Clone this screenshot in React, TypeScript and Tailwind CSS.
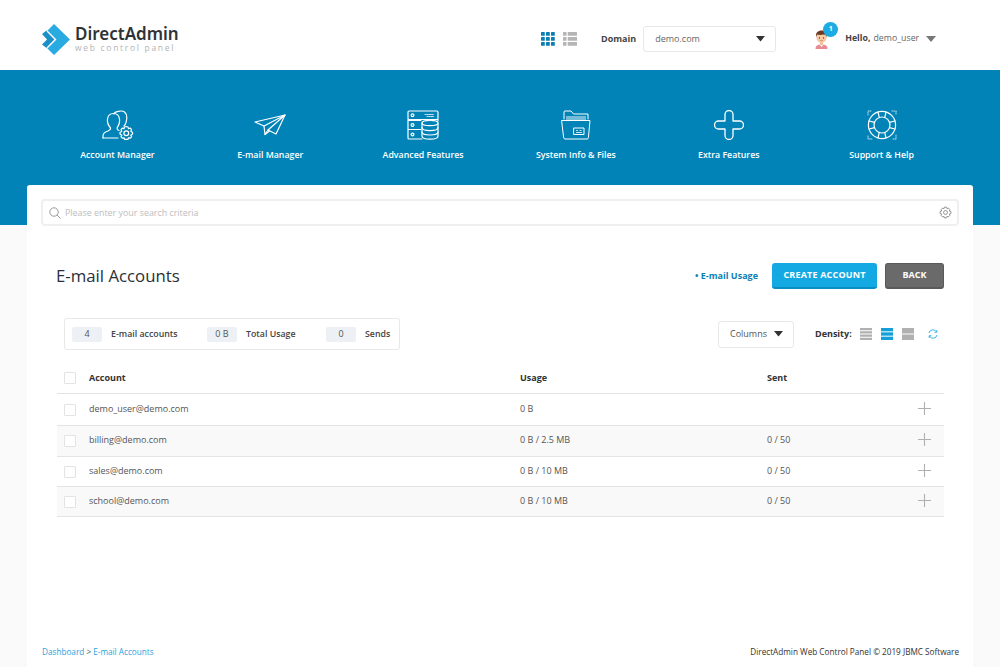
import React from "react";

const Logo = () => (
  <svg width="28" height="32" viewBox="0 0 28 32" className="shrink-0 mt-[1px]">
    <path d="M12 0 L28 15.5 L12 31 L5 24 L13.5 15.5 L5 7 Z" fill="#29abe2" />
    <path d="M0 10 L4.5 6.5 L12.5 15.5 L4.5 24 L0 20.5 L5 15.5 Z" fill="#1b8fc6" />
    <path d="M5 7 L13.5 15.5 L5 24" fill="none" stroke="#fff" strokeWidth="1.4" />
  </svg>
);

const GridIcon = () => (
  <svg width="14" height="14" viewBox="0 0 14 14" fill="#0a7fb5">
    {[0, 5, 10].map((y) => [0, 5, 10].map((x) => <rect key={`${x}${y}`} x={x} y={y} width="3.8" height="3.8" rx="0.6" />))}
  </svg>
);
const ListIcon = () => (
  <svg width="14" height="14" viewBox="0 0 14 14" fill="#b5b5b5">
    {[0, 5, 10].map((y) => (
      <g key={y}>
        <rect x="0" y={y} width="3.5" height="3.8" rx="0.5" />
        <rect x="4.7" y={y} width="9.3" height="3.8" rx="0.5" />
      </g>
    ))}
  </svg>
);

const Avatar = () => (
  <svg width="15" height="19" viewBox="0 0 14 19">
    <path d="M1 19 C1 15.5 3 14.5 7 14.5 C11 14.5 13 15.5 13 19 Z" fill="#e88a94" />
    <path d="M5 14.5 L7 17 L9 14.5 Z" fill="#fff" />
    <rect x="5.5" y="11.5" width="3" height="3.5" fill="#f0bd94" />
    <ellipse cx="7" cy="7.5" rx="5" ry="5.4" fill="#f6caa4" />
    <path d="M1.6 7.5 C0.8 2.5 3.5 0.5 7 0.5 C10.5 0.5 13 2.5 12.4 7.5 C12 5.5 11 4.5 9.5 4.5 C7 5 4 5 3 4.5 C2.2 5.1 1.9 6.1 1.6 7.5 Z" fill="#6b3a22" />
    <circle cx="5" cy="7.9" r="0.6" fill="#3a2a20" />
    <circle cx="9" cy="7.9" r="0.6" fill="#3a2a20" />
    <path d="M5.6 10.3 Q7 11.3 8.4 10.3" stroke="#b5654a" strokeWidth="0.6" fill="none" />
  </svg>
);

const stroke = { fill: "none", stroke: "#fff", strokeWidth: 1.2, strokeLinecap: "round" as const, strokeLinejoin: "round" as const };

const AccountIcon = () => (
  <svg width="32" height="30" viewBox="0 0 32 30" className="ml-[1px]" {...stroke}>
    <path d="M12 4 C12 1.5 20 0 22.5 2 C25 4 25 9 24 12.5 C23.5 14 23 15 22 16" />
    <path d="M1 28 L1 26 C1 23 3 22 6 21 C8 20 9 19.5 8.5 18 C6 15 5 12 5.5 9 C6 5 9 3.5 11.5 3.5 C14 3.5 17 5 17.5 9 C18 12 17 15 15 18 C15 19 15.5 20 17 20.5" />
    <path d="M1 28 L16 28" />
    <circle cx="24.3" cy="23.2" r="2.4" />
    <path d="M24.3 16.5 L26 17 L26.5 18.6 L28.3 18.2 L29.6 19.6 L28.8 21.2 L30.6 22.4 L30.6 24 L28.8 25.2 L29.6 26.8 L28.3 28.2 L26.5 27.8 L26 29.4 L22.6 29.4 L22.1 27.8 L20.3 28.2 L19 26.8 L19.8 25.2 L18 24 L18 22.4 L19.8 21.2 L19 19.6 L20.3 18.2 L22.1 18.6 L22.6 17 Z" />
  </svg>
);
const MailIcon = () => (
  <svg width="32" height="22" viewBox="0 0 32 22" {...stroke}>
    <path d="M1 8 L31 1 L22 20 L14 16 L11 20.5 L10 12 Z" />
    <path d="M10 12 L31 1 L14 16" />
    <path d="M11 20.5 L15.5 17" />
  </svg>
);
const ServerIcon = () => (
  <svg width="32" height="30" viewBox="0 0 32 30" {...stroke}>
    <rect x="1" y="1" width="30" height="8.5" rx="1.2" />
    <path d="M1 10.5 H14 M1 19.5 H14 M1 9.5 V28 Q1 29 2 29 H15" />
    <path d="M31 9.5 V11" />
    <circle cx="5.5" cy="5.2" r="1.4" />
    <circle cx="5.5" cy="15" r="1.4" />
    <circle cx="5.5" cy="24.5" r="1.4" />
    <path d="M18 4.5 H27 M20 6.5 H27" strokeWidth="0.8" strokeDasharray="1 0.8" />
    <ellipse cx="23" cy="13" rx="8" ry="2.6" />
    <path d="M15 13 V26 C15 28 19 29.2 23 29.2 C27 29.2 31 28 31 26 V13" />
    <path d="M15 17.5 C15 19.5 19 20.6 23 20.6 C27 20.6 31 19.5 31 17.5" />
    <path d="M15 22 C15 24 19 25 23 25 C27 25 31 24 31 22" />
  </svg>
);
const FolderIcon = () => (
  <svg width="30" height="30" viewBox="0 0 30 30" {...stroke} strokeWidth={1}>
    <path d="M3 9 V2 Q3 1 4 1 H10 L12.5 4 H27 V9" />
    <rect x="5" y="6" width="20" height="4" fill="#fff" fillOpacity="0.45" stroke="none" />
    <path d="M1 10.5 H29 L27.4 27.5 Q27.3 29 26 29 H4 Q2.7 29 2.6 27.5 Z" />
    <rect x="13" y="18" width="10" height="6.5" />
    <path d="M15.5 20.5 H16.5 M19 20.5 H20 M15.5 22.5 H20.5" strokeWidth="0.8" />
  </svg>
);
const PlusIcon = () => (
  <svg width="30" height="30" viewBox="0 0 30 30" {...stroke} strokeWidth={1.3}>
    <path d="M11 4.5 A4 4 0 0 1 19 4.5 V11 H25.5 A4 4 0 0 1 25.5 19 H19 V25.5 A4 4 0 0 1 11 25.5 V19 H4.5 A4 4 0 0 1 4.5 11 H11 Z" />
  </svg>
);
const BuoyIcon = () => (
  <svg width="30" height="30" viewBox="0 0 30 30" {...stroke}>
    <circle cx="15" cy="15" r="13.6" />
    <circle cx="15" cy="15" r="8" />
    <path d="M11 2.2 L12.3 7.6 M19 2.2 L17.7 7.6 M11 27.8 L12.3 22.4 M19 27.8 L17.7 22.4 M2.2 11 L7.6 12.3 M2.2 19 L7.6 17.7 M27.8 11 L22.4 12.3 M27.8 19 L22.4 17.7" />
    <path d="M1 5 V1 H5 M25 1 H29 V5 M29 25 V29 H25 M5 29 H1 V25" strokeWidth="0.7" strokeDasharray="1 1" />
  </svg>
);

const nav: [React.ReactNode, string][] = [
  [<AccountIcon />, "Account Manager"],
  [<MailIcon />, "E-mail Manager"],
  [<ServerIcon />, "Advanced Features"],
  [<FolderIcon />, "System Info & Files"],
  [<PlusIcon />, "Extra Features"],
  [<BuoyIcon />, "Support & Help"],
];

const Caret = ({ color = "#333", w = 10 }: { color?: string; w?: number }) => (
  <svg width={w} height={(w * 6) / 10} viewBox="0 0 10 6"><path d="M0 0 H10 L5 6 Z" fill={color} /></svg>
);

const Gear = () => (
  <svg width="13" height="13" viewBox="0 0 24 24" fill="none" stroke="#8a8a8a" strokeWidth="1.7" strokeLinejoin="round">
    <circle cx="12" cy="12" r="3.6" />
    <path d="M10 2 H14 L14.8 5 L17.4 3.9 L20.1 6.6 L19 9.2 L22 10 V14 L19 14.8 L20.1 17.4 L17.4 20.1 L14.8 19 L14 22 H10 L9.2 19 L6.6 20.1 L3.9 17.4 L5 14.8 L2 14 V10 L5 9.2 L3.9 6.6 L6.6 3.9 L9.2 5 Z" />
  </svg>
);

const Density = ({ n, color }: { n: number; color: string }) => {
  const gap = 1;
  const h = (12 - (n - 1) * gap) / n;
  return (
    <svg width="12" height="12" viewBox="0 0 12 12" fill={color}>
      {Array.from({ length: n }).map((_, i) => (
        <rect key={i} x="0" y={i * (h + gap)} width="12" height={h} />
      ))}
    </svg>
  );
};

const Stat = ({ v, l, cls }: { v: string; l: string; cls: string }) => (
  <div className={`flex items-center ${cls}`}>
    <span className="w-[30px] h-[15px] bg-[#edf1f5] rounded-[2px] flex items-center justify-center text-[#555]">{v}</span>
    <span className="ml-[9px] pt-[1px] font-semibold text-[#444] text-[8.8px]">{l}</span>
  </div>
);

const Check = () => <span className="block w-[12px] h-[12px] bg-white border border-[#e3e3e3] rounded-[1px]" />;

const rows = [
  ["demo_user@demo.com", "0 B", "", "h-[32px]", ""],
  ["billing@demo.com", "0 B / 2.5 MB", "0 / 50", "h-[31px]", "bg-[#f9f9f9]"],
  ["sales@demo.com", "0 B / 10 MB", "0 / 50", "h-[30px]", ""],
  ["school@demo.com", "0 B / 10 MB", "0 / 50", "h-[30px]", "bg-[#f9f9f9]"],
];

const RowPlus = () => (
  <svg width="13" height="13" viewBox="0 0 13 13" stroke="#b0b0b0" strokeWidth="1.1"><path d="M6.5 0 V13 M0 6.5 H13" /></svg>
);

export default function App() {
  return (
    <div className="w-[1000px] h-[667px] overflow-hidden bg-[#fafafa] text-[9px] text-[#555] flex flex-col" style={{ fontFamily: '"Open Sans", "Noto Sans", sans-serif' }}>
      <header className="h-[70px] shrink-0 bg-white flex items-center pt-[8px]">
        <div className="ml-[42px] flex items-center w-[498px]">
          <Logo />
          <div className="ml-[5px] mt-[1px] flex flex-col">
            <span className="text-[17px] leading-[14px] font-semibold text-[#2e3338]" style={{ fontFamily: '"Noto Sans", sans-serif' }}>DirectAdmin</span>
            <span className="text-[8.5px] leading-[9px] tracking-[0.2em] text-[#b4b4b4] mt-[2px] whitespace-nowrap">web control panel</span>
          </div>
        </div>
        <div className="ml-[1px] flex items-center gap-[8px]">
          <GridIcon />
          <ListIcon />
        </div>
        <span className="ml-[24px] font-bold text-[9px] text-[#444]">Domain</span>
        <div className="ml-[7px] w-[133px] h-[26px] border border-[#e8e8e8] rounded-[3px] flex items-center justify-between pl-[11px] pr-[10px] text-[9px] text-[#666]">
          demo.com
          <Caret w={9} />
        </div>
        <div className="ml-[38px] relative flex items-center h-[19px] mt-[1px]">
          <Avatar />
          <span className="absolute left-[9px] -top-[8px] w-[15px] h-[15px] rounded-full bg-[#1cabe2] text-white text-[7px] font-bold flex items-center justify-center">1</span>
        </div>
        <span className="ml-[16px] font-bold text-[8.8px] text-[#444]">Hello,</span>
        <span className="ml-[3px] text-[8.8px] text-[#666]">demo_user</span>
        <span className="ml-[7px]"><Caret color="#777" /></span>
      </header>

      <nav className="h-[155px] shrink-0 bg-[#0183b7] pl-[41px] pr-[42px]">
        <div className="grid grid-cols-6 pt-[40px]">
          {nav.map(([icon, label]) => (
            <div key={label} className="flex flex-col items-center">
              <div className="h-[30px] flex items-center justify-center">{icon}</div>
              <span className="mt-[8px] text-[8.8px] leading-[14px] font-semibold text-white whitespace-nowrap">{label}</span>
            </div>
          ))}
        </div>
      </nav>

      <main className="-mt-[40px] mx-[27px] flex-1 bg-white rounded-t-[3px] flex flex-col relative">
        <div className="mx-[14px] mt-[14px] h-[27px] border-2 border-[#efefef] rounded-[4px] flex items-center pl-[6px] pr-[5px]">
          <svg width="12" height="12" viewBox="0 0 12 12" fill="none" stroke="#9a9a9a" strokeWidth="1"><circle cx="5" cy="5" r="4.2" /><path d="M8 8 L11.5 11.5" /></svg>
          <span className="ml-[4px] text-[#bdbdbd] flex-1 text-[8.9px]">Please enter your search criteria</span>
          <Gear />
        </div>

        <div className="ml-[30px] mr-[29px] mt-[36px] h-[27px] flex items-center">
          <h1 className="text-[16.8px] font-normal text-[#2a2f35] -ml-[1px] mt-[1px]">E-mail Accounts</h1>
          <a className="ml-auto text-[9px] font-bold text-[#0a7fb5]">• E-mail Usage</a>
          <button className="ml-[14px] w-[105px] h-[26px] bg-[#14a9e3] border-b-2 border-[#0a8fc4] rounded-[3px] text-white font-bold text-[9px] tracking-[0.02em]">CREATE ACCOUNT</button>
          <button className="ml-[8px] w-[59px] h-[26px] bg-[#6a6a6a] border border-[#5a5a5a] border-b-2 rounded-[3px] text-white font-bold text-[9px]">BACK</button>
        </div>

        <div className="mt-[29px] ml-[37px] mr-[29px] h-[32px] flex items-center">
          <div className="w-[336px] h-[32px] border border-[#e8e8e8] rounded-[3px] relative flex items-center">
            <Stat v="4" l="E-mail accounts" cls="ml-[7px] w-[135px]" />
            <Stat v="0 B" l="Total Usage" cls="w-[119px]" />
            <Stat v="0" l="Sends" cls="" />
          </div>
          <div className="ml-[318px] w-[76px] h-[27px] border border-[#e8e8e8] rounded-[3px] flex items-center justify-center gap-[7px] pl-[1px] text-[#555]">
            Columns <Caret w={9} />
          </div>
          <span className="ml-[21px] font-bold text-[#333]">Density:</span>
          <span className="ml-[8px]"><Density n={4} color="#b0b0b0" /></span>
          <span className="ml-[9px]"><Density n={3} color="#14a0d8" /></span>
          <span className="ml-[9px]"><Density n={2} color="#b0b0b0" /></span>
          <svg className="ml-[14px]" width="10" height="10" viewBox="0 0 10 10" fill="none" stroke="#29abe2" strokeWidth="0.9">
            <path d="M1 4 A4 4 0 0 1 8.5 3 M9 6 A4 4 0 0 1 1.5 7" />
            <path d="M8.8 1 V3.3 H6.6 M1.2 9 V6.7 H3.4" />
          </svg>
        </div>

        <div className="ml-[30px] mr-[29px] mt-[13px]">
          <div className="h-[31px] flex items-center border-b border-[#e4e4e4] font-bold text-[#333]">
            <span className="ml-[7px] w-[25px]"><Check /></span>
            <span className="w-[431px]">Account</span>
            <span className="w-[247px]">Usage</span>
            <span>Sent</span>
          </div>
          {rows.map(([a, u, s, h, bg]) => (
            <div key={a} className={`${h} ${bg} flex items-center border-b border-[#e4e4e4] text-[#555] pb-[2px]`}>
              <span className="ml-[7px] w-[25px] mt-[2px]"><Check /></span>
              <span className="w-[431px]">{a}</span>
              <span className="w-[247px]">{u}</span>
              <span className="flex-1">{s}</span>
              <span className="mr-[13px] -mt-[1px]"><RowPlus /></span>
            </div>
          ))}
        </div>

        <div className="mt-auto mx-[14px] mb-[9px] flex justify-between text-[8.2px]">
          <span className="text-[#29a3dc] ml-[1px]">Dashboard <span className="text-[#555]">&gt;</span> E-mail Accounts</span>
          <span className="text-[#333]">DirectAdmin Web Control Panel © 2019 JBMC Software</span>
        </div>
      </main>
    </div>
  );
}
